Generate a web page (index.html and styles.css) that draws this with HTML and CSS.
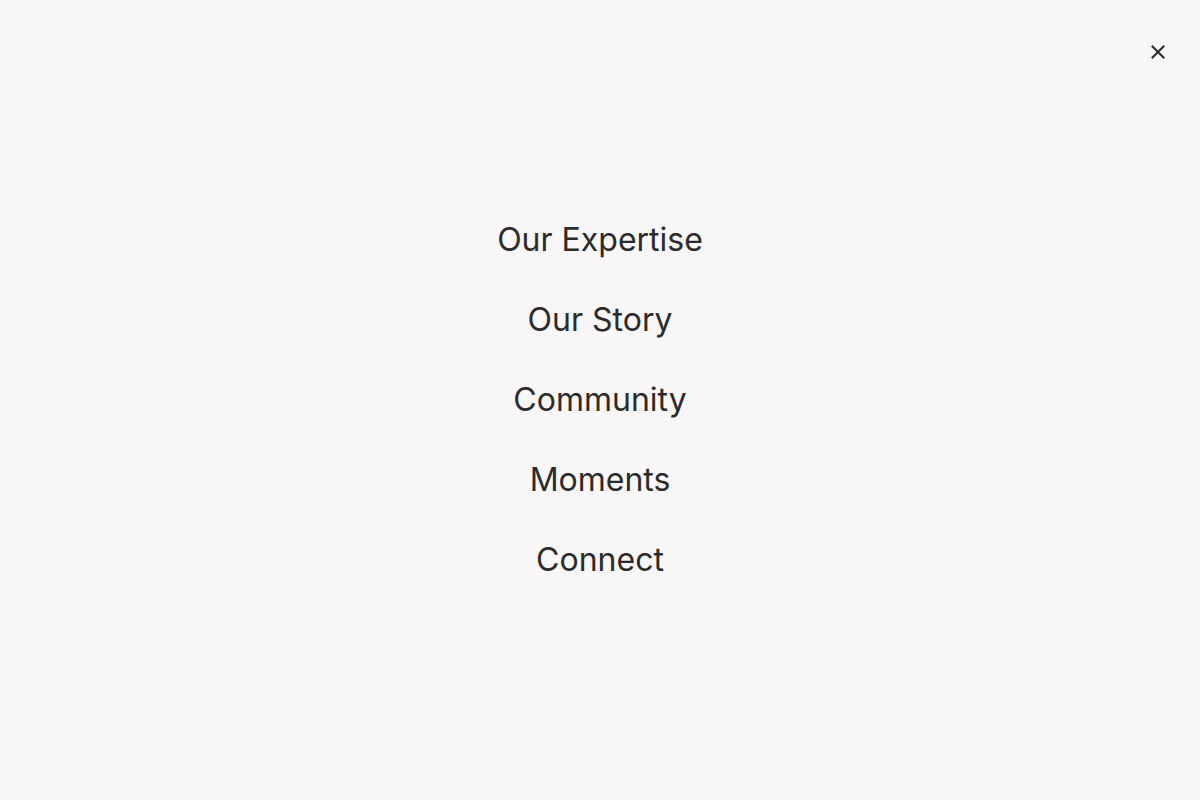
FILE: index.html
```html
<!DOCTYPE html>
<html lang="en">
<head>
    <meta charset="UTF-8">
    <meta name="viewport" content="width=device-width, initial-scale=1.0">
    <title>Menu</title>
    <link rel="stylesheet" href="styles.css">
</head>
<body>
    <div id="menu-overlay">
        <button id="close-button" aria-label="Close menu">
            <svg width="16" height="16" viewBox="0 0 16 16" fill="none" stroke="currentColor" stroke-width="2" stroke-linecap="square">
                <path d="M2.5 2.5 L13.5 13.5 M13.5 2.5 L2.5 13.5"/>
            </svg>
        </button>

        <nav id="menu-links">
            <a href="#expertise">Our Expertise</a>
            <a href="#story">Our Story</a>
            <a href="#community">Community</a>
            <a href="#moments">Moments</a>
            <a href="#connect">Connect</a>
        </nav>
    </div>
</body>
</html>
```

FILE: styles.css
```css
body {
    font-family: Inter, "Noto Sans", sans-serif;
    margin: 0;
    padding: 0;
    background-color: #f8f6f6;
    color: #2b2b2b;
}

#menu-overlay {
    min-height: 100vh;
    display: flex;
    align-items: center;
    justify-content: center;
    position: relative;
}

#close-button {
    position: absolute;
    top: 43px;
    right: 33px;
    width: 18px;
    height: 18px;
    padding: 0;
    border: none;
    background: none;
    color: #2b2b2b;
    cursor: pointer;
    display: flex;
    align-items: center;
    justify-content: center;
}

#menu-links {
    display: flex;
    flex-direction: column;
    align-items: center;
}

#menu-links a {
    color: #2b2b2b;
    text-decoration: none;
    font-size: 32px;
    line-height: 80px;
}
```
